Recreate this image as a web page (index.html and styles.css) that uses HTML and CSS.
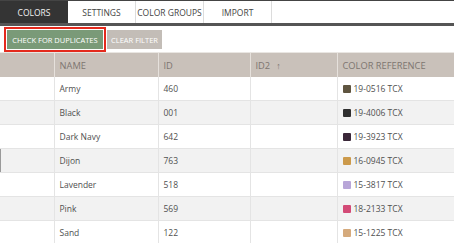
FILE: index.html
```html
<!DOCTYPE html>
<html>
<head>
<meta charset="utf-8">
<link rel="stylesheet" href="styles.css">
</head>
<body>
<div class="tabs">
  <div class="tab active">COLORS</div>
  <div class="tab">SETTINGS</div>
  <div class="tab">COLOR GROUPS</div>
  <div class="tab">IMPORT</div>
</div>
<div class="toolbar">
  <button class="btn btn-check">CHECK FOR DUPLICATES</button>
  <button class="btn btn-clear">CLEAR FILTER</button>
</div>
<table class="grid">
  <colgroup>
    <col class="c1"><col class="c2"><col class="c3"><col class="c4"><col class="c5">
  </colgroup>
  <thead>
    <tr><th></th><th>NAME</th><th>ID</th><th>ID2<span class="arrow">&#8593;</span></th><th>COLOR REFERENCE</th></tr>
  </thead>
  <tbody>
    <tr><td></td><td>Army</td><td>460</td><td></td><td><span class="sw" style="background:#5f5540"></span>19-0516 TCX</td></tr>
    <tr class="alt"><td></td><td>Black</td><td>001</td><td></td><td><span class="sw" style="background:#2f2f2f"></span>19-4006 TCX</td></tr>
    <tr><td></td><td>Dark Navy</td><td>642</td><td></td><td><span class="sw" style="background:#3a2738"></span>19-3923 TCX</td></tr>
    <tr class="alt marked"><td></td><td>Dijon</td><td>763</td><td></td><td><span class="sw" style="background:#cc9a4b"></span>16-0945 TCX</td></tr>
    <tr><td></td><td>Lavender</td><td>518</td><td></td><td><span class="sw" style="background:#b8a6d8"></span>15-3817 TCX</td></tr>
    <tr class="alt"><td></td><td>Pink</td><td>569</td><td></td><td><span class="sw" style="background:#d34b77"></span>18-2133 TCX</td></tr>
    <tr><td></td><td>Sand</td><td>122</td><td></td><td><span class="sw" style="background:#d5aa7c"></span>15-1225 TCX</td></tr>
  </tbody>
</table>
</body>
</html>
```
FILE: styles.css
```css
html, body {
  margin: 0;
  padding: 0;
  background: #ffffff;
  font-family: "Open Sans", "Noto Sans", sans-serif;
  color: #555;
}
.tabs {
  display: flex;
  height: 22px;
  border-top: 1px solid #444;
  border-bottom: 3px solid #555;
}
.tab {
  width: 68px;
  display: flex;
  align-items: center;
  justify-content: center;
  font-size: 8.5px;
  color: #444;
  border-right: 1px solid #dcdcdc;
  box-sizing: border-box;
}
.tab.active {
  background: #343434;
  color: #f2f2f2;
  border-right: none;
}
.toolbar {
  display: flex;
  gap: 4px;
  padding: 4px 0 0 7px;
  height: 22px;
}
.btn {
  height: 19px;
  border: none;
  padding: 0;
  font-family: "Open Sans", "Noto Sans", sans-serif;
  font-size: 7.5px;
  color: #fff;
  cursor: pointer;
}
.btn-check {
  width: 96px;
  background: #7a9a78;
  outline: 2px solid #e42a1d;
  outline-offset: 1px;
}
.btn-clear {
  width: 55px;
  background: #c3bdb7;
}
.grid {
  width: 454px;
  border-collapse: collapse;
  table-layout: fixed;
  font-size: 8.5px;
}
.c1 { width: 54px; }
.c2 { width: 104px; }
.c3 { width: 92px; }
.c4 { width: 87px; }
.c5 { width: 117px; }
.grid th {
  height: 24px;
  background: #c9c1ba;
  color: #7d7570;
  font-weight: normal;
  font-size: 9.3px;
  text-align: left;
  padding: 0 0 0 5px;
  border-left: 1px solid #e6e1dc;
  border-top: 1px solid #e9e6e2;
}
.grid th:first-child { border-left: none; }
.arrow { font-size: 9px; margin-left: 6px; }
.grid td {
  height: 23px;
  padding: 0 0 0 5px;
  color: #505050;
  border-left: 1px solid #e4e4e4;
  border-bottom: 1px solid #e4e4e4;
  white-space: nowrap;
}
.grid td:first-child { border-left: none; }
.grid tr.alt td { background: #f2f2f2; }
.grid tr.marked td:first-child { box-shadow: inset 1px 0 0 #9a9a9a; }
.sw {
  display: inline-block;
  width: 8px;
  height: 8px;
  border-radius: 1px;
  vertical-align: -1px;
  margin-right: 3px;
}
```
